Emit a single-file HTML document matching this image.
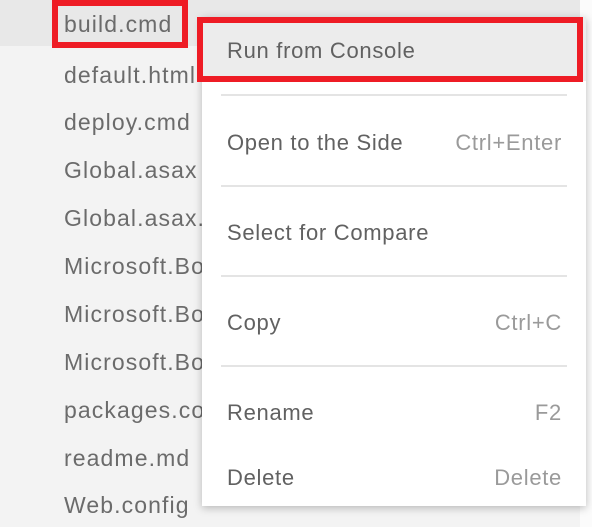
<!DOCTYPE html>
<html><head><style>
body{margin:0;width:592px;height:527px;overflow:hidden;background:#f3f3f3;position:relative;font-family:"Segoe UI","Liberation Sans",sans-serif;}
.strip{position:absolute;left:580px;top:0;width:12px;height:527px;background:#fbfbfb}
.top{position:absolute;left:0;top:0;width:592px;height:46px;background:#e8e8e8}
.f{position:absolute;left:64px;font-size:23px;letter-spacing:1.1px;color:#6b6b6b;line-height:30px;white-space:nowrap}
.rb{position:absolute;border:6px solid #ee1c25;box-sizing:border-box}
.menu{position:absolute;left:202px;top:17px;width:384px;height:489px;background:#fff;box-shadow:0 2px 8px rgba(0,0,0,.25)}
.m{position:absolute;left:25px;right:24px;font-size:22px;letter-spacing:0.7px;color:#616161;line-height:30px}
.m span{position:absolute;right:0;color:#9a9a9a}
.sep{position:absolute;left:19px;right:19px;height:2px;background:#e4e4e4}
</style></head><body>
<div class="top"></div>
<div class="strip"></div>
<div class="f" style="top:9px">build.cmd</div>
<div class="f" style="top:60px">default.html</div>
<div class="f" style="top:107px">deploy.cmd</div>
<div class="f" style="top:155px">Global.asax</div>
<div class="f" style="top:203px">Global.asax.cs</div>
<div class="f" style="top:251px">Microsoft.Bot</div>
<div class="f" style="top:299px">Microsoft.Bot</div>
<div class="f" style="top:347px">Microsoft.Bot</div>
<div class="f" style="top:395px">packages.config</div>
<div class="f" style="top:443px">readme.md</div>
<div class="f" style="top:490px">Web.config</div>
<div class="rb" style="left:52px;top:0;width:136px;height:48px"></div>
<div class="menu">
<div style="position:absolute;left:0;top:0;width:384px;height:64px;background:#ececec"></div>
<div class="m" style="top:19px">Run from Console</div>
<div class="sep" style="top:77px"></div>
<div class="m" style="top:111px">Open to the Side<span>Ctrl+Enter</span></div>
<div class="sep" style="top:168px"></div>
<div class="m" style="top:201px">Select for Compare</div>
<div class="sep" style="top:258px"></div>
<div class="m" style="top:291px">Copy<span>Ctrl+C</span></div>
<div class="sep" style="top:348px"></div>
<div class="m" style="top:381px">Rename<span>F2</span></div>
<div class="m" style="top:446px">Delete<span>Delete</span></div>
</div>
<div class="rb" style="left:197px;top:17px;width:386px;height:65px"></div>
</body></html>
